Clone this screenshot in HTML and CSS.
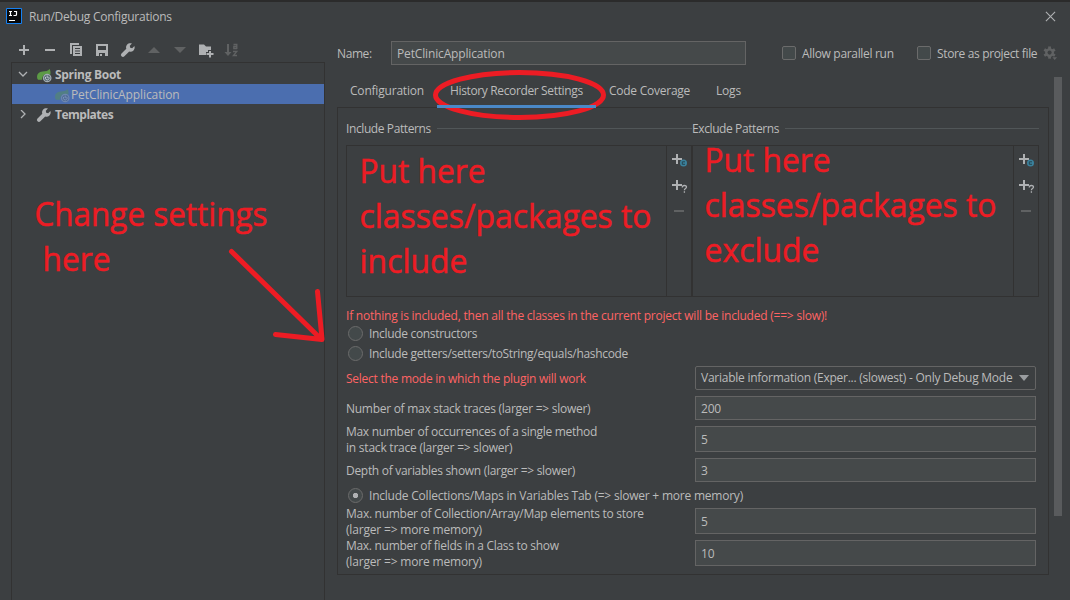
FILE: index.html
```html
<!DOCTYPE html>
<html lang="en">
<head>
<meta charset="utf-8">
<title>Run/Debug Configurations</title>
<link rel="stylesheet" href="styles.css">
</head>
<body>
<svg class="defs" width="0" height="0">
  <symbol id="wrench" viewBox="0 0 16 16"><path d="M14.4 4.1 12.2 6.2 10.2 5.8 9.8 3.8 11.9 1.6C10.2 1 8.2 1.4 7 2.8 6 3.9 5.8 5.400 6.300 6.700L1.500 11.500a2 2 0 0 0 0 2.800 2 2 0 0 0 2.900 0L9.200 9.600c1.400.5 3 .2 4.100-.9 1.300-1.200 1.700-3 1.100-4.600z"/></symbol>
  <symbol id="spring" viewBox="0 0 16 16"><path class="leaf" d="M13.600 2C12 4 9.500 4.300 6.500 4.600 3 5 1 7 1 9.800 1 11 1.300 12 2 12.800h4.200C6 9 8.500 7 11.500 7c1 0 2 .2 2.800.700C14.800 5.800 14.500 3.500 13.600 2z"/><circle class="ring" cx="11.200" cy="11" r="3.700"/><path class="power" d="M11.200 8.500v2.700M9.800 9.800a1.900 1.900 0 1 0 2.800 0"/></symbol>
  <symbol id="add-class" viewBox="0 0 18 16"><path class="fill" d="M2 6h4V2h2v4h4v2H8v4H6V8H2z"/><circle cx="13.500" cy="11" r="3.500" fill="#3b819c"/><path d="M15 9.800h-2.700v2.500H15" fill="none" stroke="#264552"/></symbol>
  <symbol id="add-pattern" viewBox="0 0 18 16"><path class="fill" d="M2 6h4V2h2v4h4v2H8v4H6V8H2z"/><path d="M12.300 9.500c0-2.600 4.200-2.600 4.200-.4 0 1.500-2.100 1.500-2.100 3.200M14.400 13.200v1.500" fill="none" stroke="#afb1b3" stroke-width="1.300"/></symbol>
</svg>
<div class="dialog">
  <header class="titlebar">
    <svg class="logo" viewBox="0 0 16 16"><path d="M.5.5h15v15H.5z" fill="#090a0b" stroke="#1681f2"/><path d="M3 3.500h3M4.500 3.500v4M3 7.500h3M8 3.500h2.500v3q0 1-1 1H7.500M3 12.500h6" fill="none" stroke="#fff" stroke-width="1.200"/></svg>
    <h1 class="title">Run/Debug Configurations</h1>
    <svg class="close" viewBox="0 0 12 12"><path d="M1 1l10 10M11 1 1 11" stroke="#afb1b3" stroke-width="1.200"/></svg>
  </header>
  <div class="body">
    <aside class="side">
      <div class="toolbar">
        <svg class="icon" viewBox="0 0 16 16"><path d="M3 7h4V3h2v4h4v2H9v4H7V9H3z"/></svg>
        <svg class="icon" viewBox="0 0 16 16"><path d="M3 7h10v2H3z"/></svg>
        <svg class="icon" viewBox="0 0 16 16"><path d="M2 1h9v2H4v9H2z"/><path d="M5 4h9v10H5zM7 6v1h5V6zM7 8.500v1h5v-1zM7 11v1h5v-1z" fill-rule="evenodd"/></svg>
        <svg class="icon" viewBox="0 0 16 16"><path d="M2 2h12v12h-3v-3H5v3H2zM4 4v4h8V4zM6 12h2v2H6z" fill-rule="evenodd"/></svg>
        <svg class="icon"><use href="#wrench"/></svg>
        <svg class="icon off" viewBox="0 0 16 16"><path d="M8 5l6 6H2z"/></svg>
        <svg class="icon off" viewBox="0 0 16 16"><path d="M2 5h12l-6 6z"/></svg>
        <svg class="icon" viewBox="0 0 16 16"><path d="M1 2.500h5l2 2h5V8h-3v2H8v3H1zM11 9h2v2h2.500v2H13v2.500h-2V13H8.500v-2H11z"/></svg>
        <svg class="icon off" viewBox="0 0 16 16"><path d="M3 2h2v8h2.500L4 14 .5 10H3z"/><path d="M9.500 2.500h3.300V7M13 4.500H9.800v2H13M9 9.500h3.800l-3.400 4H13" fill="none" stroke="#606263" stroke-width="1.300"/></svg>
      </div>
      <div class="tree">
        <div class="node">
          <svg class="chev" viewBox="0 0 10 10"><path d="M1 2l4 4 4-4"/></svg>
          <svg class="nicon"><use href="#spring"/></svg><span class="strong">Spring Boot</span>
        </div>
        <div class="node selected"><svg class="nicon faded"><use href="#spring"/></svg><span class="leafname">PetClinicApplication</span></div>
        <div class="node">
          <svg class="chev" viewBox="0 0 10 10"><path d="M3 0l4 4-4 4"/></svg>
          <svg class="nicon"><use href="#wrench"/></svg><span class="strong templates">Templates</span>
        </div>
      </div>
    </aside>
    <main class="main">
      <div class="namebar">
        <span class="namelabel">Name:</span>
        <div class="field namefield">PetClinicApplication</div>
        <span class="check"><i class="box"></i><span class="parallel">Allow parallel run</span></span>
        <span class="check store"><i class="box"></i><span class="storetext">Store as project file</span></span>
        <svg class="gear" viewBox="0 0 16 16"><g transform="translate(7 7)"><path d="M-1.500-6.500h3V6.500h-3z"/><path d="M-1.500-6.500h3V6.500h-3z" transform="rotate(60)"/><path d="M-1.500-6.500h3V6.500h-3z" transform="rotate(120)"/><circle r="4.700"/><circle class="hole" r="2.200"/></g><path d="M10 12h5l-2.500 3z"/></svg>
      </div>
      <nav class="tabs">
        <span class="tab t1">Configuration</span><span class="tab t2 active">History Recorder Settings</span><span class="tab t3">Code Coverage</span><span class="tab t4">Logs</span>
      </nav>
      <section class="panel">
        <div class="lists">
          <div class="group">
            <div class="legend"><span class="inc">Include Patterns</span></div>
            <div class="list"><div class="items"></div><div class="strip"><svg><use href="#add-class"/></svg><svg><use href="#add-pattern"/></svg><i class="minus"></i></div></div>
          </div>
          <div class="group exclude">
            <div class="legend"><span class="exc">Exclude Patterns</span></div>
            <div class="list"><div class="items"></div><div class="strip"><svg><use href="#add-class"/></svg><svg><use href="#add-pattern"/></svg><i class="minus"></i></div></div>
          </div>
        </div>
        <div class="form">
          <div class="row h18 red"><span class="w1">If nothing is included, then all the classes in the current project will be included (==&gt; slow)!</span></div>
          <div class="row h20"><i class="radio"></i><span class="w2">Include constructors</span></div>
          <div class="row h20"><i class="radio"></i><span class="w2">Include getters/setters/toString/equals/hashcode</span></div>
          <div class="row h29"><span class="label red w4">Select the mode in which the plugin will work</span><div class="field combo"><span class="w4">Variable information (Exper... (slowest) - Only Debug Mode</span><svg class="arrow" viewBox="0 0 10 6"><path d="M0 0h10L5 6z"/></svg></div></div>
          <div class="row h31"><span class="label w6">Number of max stack traces (larger =&gt; slower)</span><div class="field value raised">200</div></div>
          <div class="row h32"><span class="label w7">Max number of occurrences of a single method<br><span class="w1">in stack trace (larger =&gt; slower)</span></span><div class="field value tall up">5</div></div>
          <div class="row h30"><span class="label w7">Depth of variables shown (larger =&gt; slower)</span><div class="field value up">3</div></div>
          <div class="row h20"><i class="radio on"></i><span class="w1">Include Collections/Maps in Variables Tab (=&gt; slower + more memory)</span></div>
          <div class="row h32"><span class="label w6">Max. number of Collection/Array/Map elements to store<br><span class="wide">(larger =&gt; more memory)</span></span><div class="field value tall up">5</div></div>
          <div class="row h32"><span class="label w7">Max. number of fields in a Class to show<br><span class="wide">(larger =&gt; more memory)</span></span><div class="field value tall up">10</div></div>
        </div>
      </section>
    </main>
    <div class="scroll"><div class="thumb"></div></div>
  </div>
</div>
<svg class="notes" viewBox="0 0 1070 600">
  <g class="ink">
    <ellipse cx="519.500" cy="95" rx="84" ry="22.500"/>
    <path d="M231.500 251.500 321 339M317.500 291.500 322 339M275.500 334.500 322 339.500"/>
  </g>
  <g class="handnote">
    <text x="34.500" y="226" textLength="233" lengthAdjust="spacingAndGlyphs">Change settings</text>
    <text x="42.500" y="271" textLength="68" lengthAdjust="spacingAndGlyphs">here</text>
    <text x="359.500" y="183" textLength="126" lengthAdjust="spacingAndGlyphs">Put here</text>
    <text x="359.500" y="228" textLength="292" lengthAdjust="spacingAndGlyphs">classes/packages to</text>
    <text x="359.500" y="273" textLength="108" lengthAdjust="spacingAndGlyphs">include</text>
    <text x="704.500" y="172" textLength="126" lengthAdjust="spacingAndGlyphs">Put here</text>
    <text x="704.500" y="217" textLength="292" lengthAdjust="spacingAndGlyphs">classes/packages to</text>
    <text x="704.500" y="262" textLength="115" lengthAdjust="spacingAndGlyphs">exclude</text>
  </g>
</svg>
</body>
</html>
```
FILE: styles.css
```css
* { box-sizing: border-box; }
body { margin: 0; background: #3c3f41; color: #bbbbbb; font: 12px/16px "Open Sans", "Noto Sans", sans-serif; letter-spacing: -0.2px; overflow: hidden; }
svg { display: block; flex: none; fill: #afb1b3; }
.defs { position: absolute; }
.dialog { width: 1070px; height: 600px; border-top: 2px solid #2b2b2b; display: flex; flex-direction: column; white-space: nowrap; }
.titlebar { height: 33px; padding: 0 14px 5px 6px; display: flex; align-items: center; }
.logo { width: 16px; height: 16px; }
.title { margin: 2px auto 0 7px; font-size: 12px; font-weight: 400; line-height: 16px; letter-spacing: -0.24px; }
.close { width: 11px; height: 11px; }
.body { flex: 1; display: flex; min-height: 0; }
.side { width: 314px; margin-left: 11px; display: flex; flex-direction: column; }
.toolbar { height: 27px; padding: 7px 0 0 5px; display: flex; gap: 10px; }
.icon { width: 16px; height: 16px; }
.icon.off { fill: #606263; }
.tree { flex: 1; border: 1px solid #323232; border-bottom: 0; padding-top: 1px; }
.node { height: 20px; padding: 2px 0 0 6px; display: flex; align-items: center; }
.chev { width: 10px; height: 10px; fill: none; stroke: #afb1b3; stroke-width: 1.3; margin-right: 8px; }
.nicon { width: 16px; height: 16px; margin-right: 3px; }
.strong { font-weight: 700; letter-spacing: -0.3px; }
.templates { letter-spacing: -0.5px; }
.leafname { letter-spacing: -0.1px; }
.selected { background: #4b6eaf; padding-left: 42px; }
.faded { opacity: .4; margin-right: 1px; }
.leaf { fill: #5c9a45; }
.ring { fill: #52636d; stroke: #a3adb3; stroke-width: 1.2; }
.power { fill: none; stroke: #c3cbd0; stroke-width: 1; }
.main { width: 712px; margin-left: 12px; display: flex; flex-direction: column; }
.namebar { height: 36px; padding-top: 6px; display: flex; align-items: flex-start; line-height: 26px; }
.namebar > * { flex: none; }
.namelabel { width: 54px; letter-spacing: -0.4px; }
.field { border: 1px solid #646464; background: #45494a; padding-left: 5px; }
.namefield { width: 355px; height: 24px; line-height: 24px; letter-spacing: -0.15px; }
.check { width: 135px; margin-left: 36px; display: flex; gap: 6px; }
.parallel { letter-spacing: -0.32px; }
.storetext { letter-spacing: -0.35px; }
.store { width: 126px; margin-left: 0; }
.box { width: 14px; height: 14px; margin-top: 5px; border: 1px solid #6b6b6b; border-radius: 2px; background: #43494a; }
.gear { width: 15px; height: 15px; margin-top: 5px; fill: #606263; }
.gear .hole { fill: #3c3f41; }
.tabs { height: 36px; display: flex; line-height: 40px; }
.tab { height: 37px; padding-left: 13px; }
.t1 { width: 100px; }
.t2 { width: 159px; letter-spacing: -0.36px; }
.t3 { width: 107px; letter-spacing: -0.25px; }
.active { border-bottom: 3px solid #4a88c7; z-index: 1; }
.panel { height: 468px; border: 1px solid #323232; padding: 12px 8px 0 8px; }
.lists { display: flex; }
.group { width: 346px; flex: none; }
.exclude { width: 347px; }
.legend { height: 25px; line-height: 18px; display: flex; gap: 6px; letter-spacing: -0.4px; }
.legend::after { content: ""; flex: 1; height: 1px; margin-top: 8px; background: #515658; }
.list { height: 152px; border: 1px solid #323232; display: flex; }
.items { flex: 1; border-right: 1px solid #323232; }
.strip { width: 24px; padding: 6px 0 0 3px; }
.strip svg { width: 18px; height: 16px; margin-bottom: 10px; }
.minus { display: block; width: 10px; height: 2px; background: #606263; margin: 16px 0 0 4px; }
.form { padding-top: 9px; }
.row { display: flex; align-items: center; }
.h18 { height: 18px; } .h20 { height: 20px; } .h29 { height: 29px; } .h30 { height: 30px; } .h31 { height: 31px; } .h32 { height: 32px; }
.row.h18 { padding-top: 2px; }
.w1 { letter-spacing: -0.22px; }
.w2 { letter-spacing: -0.32px; }
.w4 { letter-spacing: -0.25px; }
.w6 { letter-spacing: -0.28px; }
.w7 { letter-spacing: -0.3px; }
.wide { letter-spacing: -0.18px; }
.red { color: #ff6464; }
.label { width: 349px; }
.value, .combo { width: 341px; height: 24px; line-height: 24px; }
.raised { margin-bottom: 1px; }
.value.tall { height: 26px; line-height: 26px; }
.up { margin-bottom: 2px; }
.combo { margin-bottom: 1px; background: #3c3f41; border-radius: 2px; display: flex; align-items: center; justify-content: space-between; padding-right: 6px; }
.arrow { width: 10px; height: 6px; fill: #9a9da0; }
.radio { width: 15px; height: 15px; margin: 0 6px 1px 2px; border: 1px solid #6b6b6b; border-radius: 50%; background: #43494a; }
.radio.on { background: radial-gradient(circle, #afb1b3 2.3px, #43494a 3px); }
.scroll { width: 8px; margin-left: 5px; padding-top: 42px; }
.thumb { height: 439px; background: #595b5d; }
.notes { position: absolute; left: 0; top: 0; width: 1070px; height: 600px; }
.ink { fill: none; stroke: #ed1c24; stroke-width: 5; stroke-linecap: round; }
.handnote { fill: #ed1c24; stroke: #ed1c24; stroke-width: .5; font: 32px "Open Sans", "Noto Sans", sans-serif; letter-spacing: 0; }
```
